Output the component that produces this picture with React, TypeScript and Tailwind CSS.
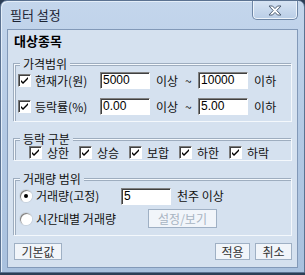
import React from "react";

const font = { fontFamily: '"Noto Sans CJK KR", "Noto Sans", sans-serif' };

function Check() {
  return (
    <span className="inline-flex h-[13px] w-[13px] shrink-0 items-center justify-center border border-t-[#7a7a7a] border-l-[#7a7a7a] border-b-white border-r-white bg-white shadow-[inset_1px_1px_0_#404040]">
      <svg width="9" height="9" viewBox="0 0 9 9">
        <path d="M1 4 L3 6 L8 1 L8 3 L3 8 L1 6 Z" fill="#000" />
      </svg>
    </span>
  );
}

function Radio({ on }: { on?: boolean }) {
  return (
    <span className="relative inline-flex h-[12px] w-[12px] shrink-0 items-center justify-center rounded-full bg-white shadow-[inset_1px_1px_0_#808080,inset_-1px_-1px_0_#ffffff,0_0_0_1px_#c8d3df]">
      {on && <span className="h-[4px] w-[4px] rounded-full bg-black" />}
    </span>
  );
}

function Field({ value, w }: { value: string; w: string }) {
  return (
    <div
      className={`${w} h-[17px] shrink-0 border border-t-[#808080] border-l-[#808080] border-b-white border-r-white bg-white pl-[2px] text-[12px] leading-[15px] text-black shadow-[inset_1px_1px_0_#404040]`}
      style={{ fontFamily: '"Liberation Sans", sans-serif' }}
    >
      {value}
    </div>
  );
}

function Group({ label, className, children }: { label: string; className: string; children: React.ReactNode }) {
  return (
    <div className={`relative shrink-0 border border-[#f4f8fc] shadow-[inset_1px_1px_0_#9eadbf,-1px_-1px_0_#9eadbf] ${className}`}>
      <span className="absolute left-[5px] top-[-8px] bg-[#d5e1ef] px-[3px] text-[12px] leading-[14px] text-[#111]">{label}</span>
      {children}
    </div>
  );
}

function Btn({ children, className, disabled }: { children: React.ReactNode; className: string; disabled?: boolean }) {
  return (
    <div
      className={`flex shrink-0 items-center justify-center border border-[#9fb0c4] bg-[#f1f5fa] text-[12px] ${disabled ? "text-[#a8b4c2]" : "text-[#333]"} ${className}`}
    >
      {children}
    </div>
  );
}

function Range({ label, from, to }: { label: string; from: string; to: string }) {
  return (
    <>
      <Check />
      <span className="ml-[4px] w-[65px]">{label}</span>
      <Field value={from} w="w-[50px]" />
      <span className="ml-[6px]">이상</span>
      <span className="ml-[7px] w-[13px]">~</span>
      <Field value={to} w="w-[50px]" />
      <span className="ml-[6px]">이하</span>
    </>
  );
}

export default function App() {
  return (
    <div className="h-[275px] w-[305px] overflow-hidden bg-[#2c3e55]" style={font}>
      <div className="flex h-[273px] w-[305px] flex-col rounded-t-[7px] border border-[#5b7291] bg-gradient-to-b from-[#c4d6ec] via-[#b3c9e4] to-[#a9c1de] shadow-[inset_1px_1px_0_#e4eef9]">
        <div className="flex h-[28px] shrink-0 items-start justify-between">
          <span className="pl-[9px] pt-[6px] text-[13px] leading-[16px] text-[#1b2333]">필터 설정</span>
          <div className="mr-[6px] flex h-[19px] w-[46px] items-center justify-center rounded-b-[5px] border border-t-0 border-[#6e86a6] bg-gradient-to-b from-[#d6e3f3] to-[#b9cde6] shadow-[inset_0_-1px_0_#eef4fb,inset_1px_0_0_#eef4fb,inset_-1px_0_0_#eef4fb]">
            <svg width="14" height="11" viewBox="0 0 14 11">
              <path
                d="M1 1 L4.5 1 L7 3.6 L9.5 1 L13 1 L8.8 5.5 L13 10 L9.5 10 L7 7.4 L4.5 10 L1 10 L5.2 5.5 Z"
                fill="#ffffff"
                stroke="#4f5f75"
                strokeWidth="1"
                strokeLinejoin="round"
              />
            </svg>
          </div>
        </div>

        <div className="mx-[6px] flex h-[239px] shrink-0 flex-col border border-[#8299b8] bg-[#d5e1ef] pl-[6px] pr-[5px]">
          <div className="shrink-0 pt-[3px] text-[13px] font-bold leading-[16px] text-black">대상종목</div>

          <Group label="가격범위" className="mt-[15px] h-[58px] pl-[3px]">
            <div className="mt-[7px] flex h-[17px] items-center text-[12px] text-[#111]">
              <Range label="현재가(원)" from="5000" to="10000" />
            </div>
            <div className="mt-[9px] flex h-[17px] items-center text-[12px] text-[#111]">
              <Range label="등락률(%)" from="0.00" to="5.00" />
            </div>
          </Group>

          <Group label="등락 구분" className="mt-[17px] h-[22px] pl-[14px]">
            <div className="mt-[6px] flex items-center text-[12px] leading-[13px] text-[#111]">
              {["상한", "상승", "보합", "하한", "하락"].map((t) => (
                <span key={t} className="flex w-[50px] shrink-0 items-center gap-[5px]">
                  <Check />
                  <span>{t}</span>
                </span>
              ))}
            </div>
          </Group>

          <Group label="거래량 범위" className="mt-[18px] h-[57px] pl-[5px]">
            <div className="mt-[7px] flex h-[18px] items-center text-[12px] text-[#111]">
              <Radio on />
              <span className="ml-[4px] w-[85px]">거래량(고정)</span>
              <Field value="5" w="w-[50px]" />
              <span className="ml-[6px]">천주 이상</span>
            </div>
            <div className="mt-[4px] flex h-[19px] items-center text-[12px] text-[#111]">
              <Radio />
              <span className="ml-[4px] w-[112px]">시간대별 거래량</span>
              <Btn className="h-[19px] w-[69px]" disabled>
                설정/보기
              </Btn>
            </div>
          </Group>

          <div className="mt-[7px] flex shrink-0 items-center">
            <Btn className="h-[17px] w-[48px]">기본값</Btn>
            <Btn className="ml-auto h-[17px] w-[35px]">적용</Btn>
            <Btn className="ml-[5px] h-[17px] w-[37px]">취소</Btn>
          </div>
        </div>
      </div>
    </div>
  );
}
